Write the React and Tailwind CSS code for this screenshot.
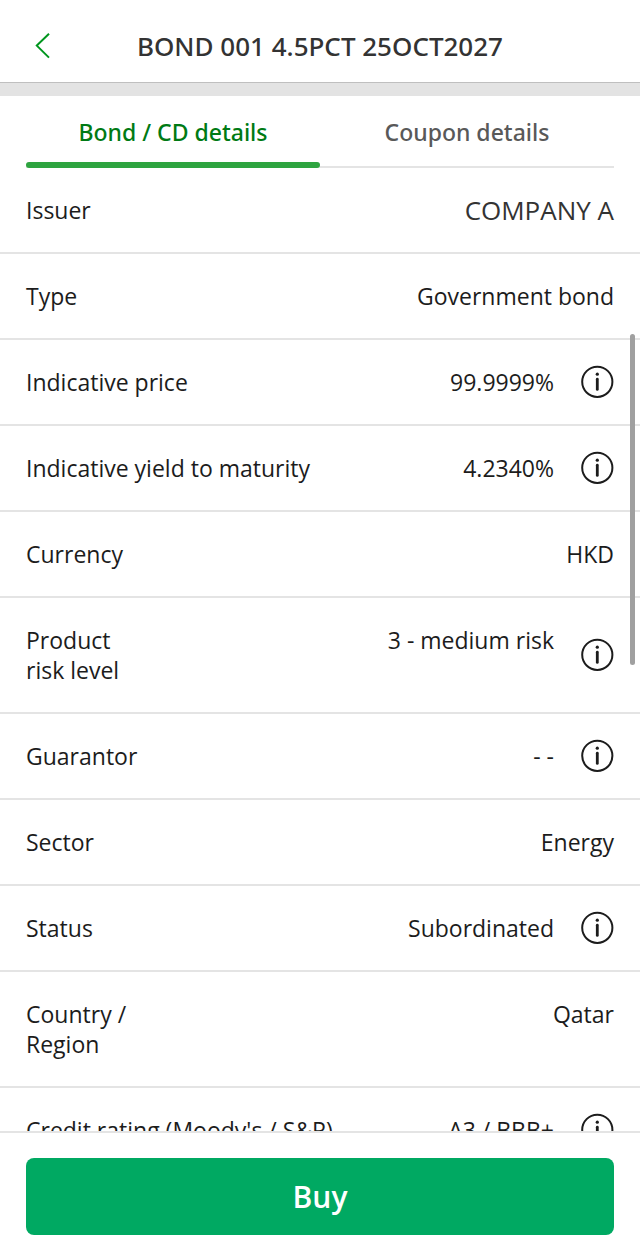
import React, { useState } from 'react';
import clsx from 'clsx';

const TABS = [
  { id: 'bond', label: 'Bond / CD details' },
  { id: 'coupon', label: 'Coupon details' },
];

const BOND_DETAILS = [
  { label: 'Issuer', value: 'COMPANY A', large: true },
  { label: 'Type', value: 'Government bond' },
  { label: 'Indicative price', value: '99.9999%', info: true },
  { label: 'Indicative yield to maturity', value: '4.2340%', info: true },
  { label: 'Currency', value: 'HKD' },
  { label: 'Product\nrisk level', value: '3 - medium risk', info: true },
  { label: 'Guarantor', value: '- -', info: true },
  { label: 'Sector', value: 'Energy' },
  { label: 'Status', value: 'Subordinated', info: true },
  { label: 'Country /\nRegion', value: 'Qatar' },
  { label: "Credit rating (Moody's / S&P)", value: 'A3 / BBB+', info: true },
];

const InfoIcon = () => (
  <svg viewBox="0 0 34 34" className="block w-[34px] h-[34px]" fill="none" aria-hidden="true">
    <circle cx="17.3" cy="16.8" r="15.1" stroke="currentColor" strokeWidth="2" />
    <circle cx="17.3" cy="9.2" r="1.6" fill="currentColor" />
    <path d="M17.3 14.2v10.2" stroke="currentColor" strokeWidth="2.8" strokeLinecap="round" />
  </svg>
);

const DetailRow = ({ label, value, info, large }) => (
  <div className="flex items-center px-[26px] py-[27px] border-b-2 border-[#e4e4e4]">
    <dt className="self-start whitespace-pre-line">{label}</dt>
    <dd className={clsx('flex-1 self-start text-right', large && 'text-[26px] text-[#333333]')}>{value}</dd>
    {info && (
      <dd className="flex items-center h-[30px] ml-[26px]">
        <button type="button" aria-label={`About ${label}`}>
          <InfoIcon />
        </button>
      </dd>
    )}
  </div>
);

const App = () => {
  const [activeTab, setActiveTab] = useState('bond');

  return (
    <div className="flex flex-col h-screen bg-white font-['Open_Sans',sans-serif] text-[23px] leading-[30px] text-[#1c1c1c]">
      <header className="flex items-center h-[83px] px-[26px] pt-[9px] border-b border-[#bfbfbf]">
        <button type="button" aria-label="Back" className="w-8 text-[#00961e]">
          <svg viewBox="0 0 32 32" className="w-8 h-8" fill="none" aria-hidden="true">
            <path d="M23 3.8 10.8 15.6 23 27.6" stroke="currentColor" strokeWidth="2" />
          </svg>
        </button>
        <h1 className="flex-1 pr-8 text-center font-['Noto_Sans',sans-serif] text-[26px] font-medium text-[#333333]">
          BOND 001 4.5PCT 25OCT2027
        </h1>
      </header>
      <div className="h-[13px] shrink-0 bg-[#e3e3e3]" />

      <div
        role="tablist"
        className="flex mx-[26px] shrink-0 border-b-2 border-[#e4e4e4] font-['Noto_Sans',sans-serif] font-medium"
      >
        {TABS.map((tab) => (
          <button
            key={tab.id}
            type="button"
            role="tab"
            aria-selected={activeTab === tab.id}
            onClick={() => setActiveTab(tab.id)}
            className={clsx(
              'relative flex-1 pt-[21px] pb-[19px]',
              activeTab === tab.id ? 'text-[#007a14]' : 'text-[#595959]'
            )}
          >
            {tab.label}
            {activeTab === tab.id && (
              <span className="absolute inset-x-0 -bottom-0.5 h-1.5 rounded-full bg-[#2ea440]" />
            )}
          </button>
        ))}
      </div>

      <main className="relative flex-1 min-h-0">
        <dl className="h-full overflow-y-auto [scrollbar-width:none]">
          {BOND_DETAILS.map((row) => (
            <DetailRow key={row.label} {...row} />
          ))}
        </dl>
        <div className="absolute right-[5px] top-[166px] w-[5px] h-[331px] rounded-full bg-[#a0a0a0]" />
      </main>

      <footer className="px-[26px] pt-[25px] pb-[15px] border-t-2 border-[#e4e4e4]">
        <button type="button" className="w-full h-[77px] rounded-lg bg-[#00a962] text-[30px] font-semibold text-white">
          Buy
        </button>
      </footer>
    </div>
  );
};

export default App;
